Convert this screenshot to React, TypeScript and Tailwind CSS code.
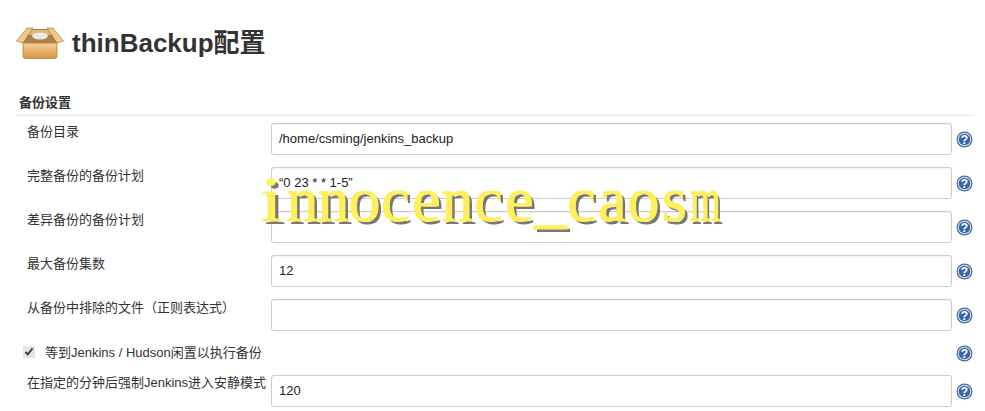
import React from "react";

const rows = [
  { label: "备份目录", value: "/home/csming/jenkins_backup" },
  { label: "完整备份的备份计划", value: "“0 23 * * 1-5”" },
  { label: "差异备份的备份计划", value: "" },
  { label: "最大备份集数", value: "12" },
  { label: "从备份中排除的文件（正则表达式）", value: "" },
];

const watermark = "innocence_caosm".split("");

function HelpIcon() {
  return (
    <svg width="17" height="17" viewBox="0 0 17 17" className="shrink-0">
      <circle cx="8.5" cy="8.5" r="8" fill="#4a6c9f" />
      <circle cx="8.5" cy="8.5" r="6.8" fill="#dbe6f3" />
      <circle cx="8.5" cy="8.5" r="5.8" fill="#3a66a6" />
      <text
        x="8.5"
        y="12.6"
        textAnchor="middle"
        fontSize="12"
        fontWeight="700"
        fontFamily="Liberation Sans"
        fill="#fff"
      >
        ?
      </text>
    </svg>
  );
}

function BoxIcon() {
  return (
    <svg width="48" height="32" viewBox="0 0 48 32" className="shrink-0">
      <defs>
        <linearGradient id="boxFront" x1="0" y1="0" x2="0" y2="1">
          <stop offset="0" stopColor="#f4d196" />
          <stop offset="1" stopColor="#d8953c" />
        </linearGradient>
      </defs>
      <path d="M11 2 L37 2 L41 16 L7 16 Z" fill="#a9824a" />
      <path d="M14 3 L34 3 L36 8 L12 8 Z" fill="#dcb878" />
      <ellipse cx="24" cy="9" rx="8" ry="3.5" fill="#ece8dc" />
      <path d="M0.5 14 L11 1 L17 1 L7 16 Z" fill="#eec98c" stroke="#a67c3f" strokeWidth="0.7" />
      <path d="M47.5 14 L37 1 L31 1 L41 16 Z" fill="#eec98c" stroke="#a67c3f" strokeWidth="0.7" />
      <path
        d="M7 16 L41 16 L41 29 Q41 31.5 38 31.5 L10 31.5 Q7 31.5 7 29 Z"
        fill="url(#boxFront)"
        stroke="#b27f38"
        strokeWidth="0.8"
      />
    </svg>
  );
}

function FormRow({ label, value }: { label: string; value: string }) {
  return (
    <div className="flex h-[44px] items-start">
      <div className="w-[255px] shrink-0 pl-[11px] pt-[1px] text-[13px] leading-[16px] text-[#333]">
        {label}
      </div>
      <div className="flex h-[32px] w-[681px] items-center rounded-[3px] border border-[#ccc] bg-white px-[7px] text-[13px] text-[#222] shadow-[inset_0_1px_1px_rgba(0,0,0,0.05)]">
        {value}
      </div>
      <div className="ml-[4px] flex h-[32px] items-center">
        <HelpIcon />
      </div>
    </div>
  );
}

export default function App() {
  return (
    <div className="relative h-[411px] w-[985px] overflow-hidden bg-white font-['Liberation_Sans','Noto_Sans_CJK_SC',sans-serif] text-[#333]">
      <div className="flex items-center gap-[8px] pl-[16px] pt-[27px]">
        <BoxIcon />
        <h1 className="text-[26px] font-bold leading-[32px] text-[#333]">thinBackup配置</h1>
      </div>

      <div className="ml-[16px] mt-[35px] w-[956px] border-b border-[#e5e5e5] pb-[4px] pl-[3px] text-[13px] font-bold leading-[17px] text-[#333]">
        备份设置
      </div>

      <div className="ml-[16px] mt-[7px]">
        {rows.map((row) => (
          <FormRow key={row.label} label={row.label} value={row.value} />
        ))}
        <div className="flex h-[20px] items-center">
          <input
            type="checkbox"
            defaultChecked
            className="mb-[2px] ml-[7px] mr-[10px] h-[12px] w-[12px] shrink-0 accent-[#e6e6e6]"
          />
          <span className="w-[911px] shrink-0 text-[13px] text-[#333]">等到Jenkins / Hudson闲置以执行备份</span>
          <HelpIcon />
        </div>
        <div className="mt-[12px] flex items-start">
          <div className="w-[255px] shrink-0 pl-[11px] text-[13px] leading-[16px] text-[#333]">
            在指定的分钟后强制Jenkins进入安静模式
          </div>
          <div className="flex h-[32px] w-[681px] items-center rounded-[3px] border border-[#ccc] bg-white px-[7px] text-[13px] text-[#222]">
            120
          </div>
          <div className="ml-[4px] flex h-[32px] items-center">
            <HelpIcon />
          </div>
        </div>
      </div>

      <div className="absolute left-[256px] top-[164px] flex font-['Liberation_Serif',serif] text-[64px] leading-[72px] text-[#ffef5c] [-webkit-text-stroke:1px_#ffef5c] [text-shadow:3px_3px_0_#777]">
        {watermark.map((ch, i) => (
          <span
            key={i}
            className={
              ch === "m"
                ? "flex w-[31px] scale-x-[0.62] justify-center"
                : ch === "i"
                  ? "flex w-[31px] scale-x-[1.2] justify-center"
                  : "flex w-[31px] justify-center"
            }
          >
            {ch}
          </span>
        ))}
      </div>
    </div>
  );
}
